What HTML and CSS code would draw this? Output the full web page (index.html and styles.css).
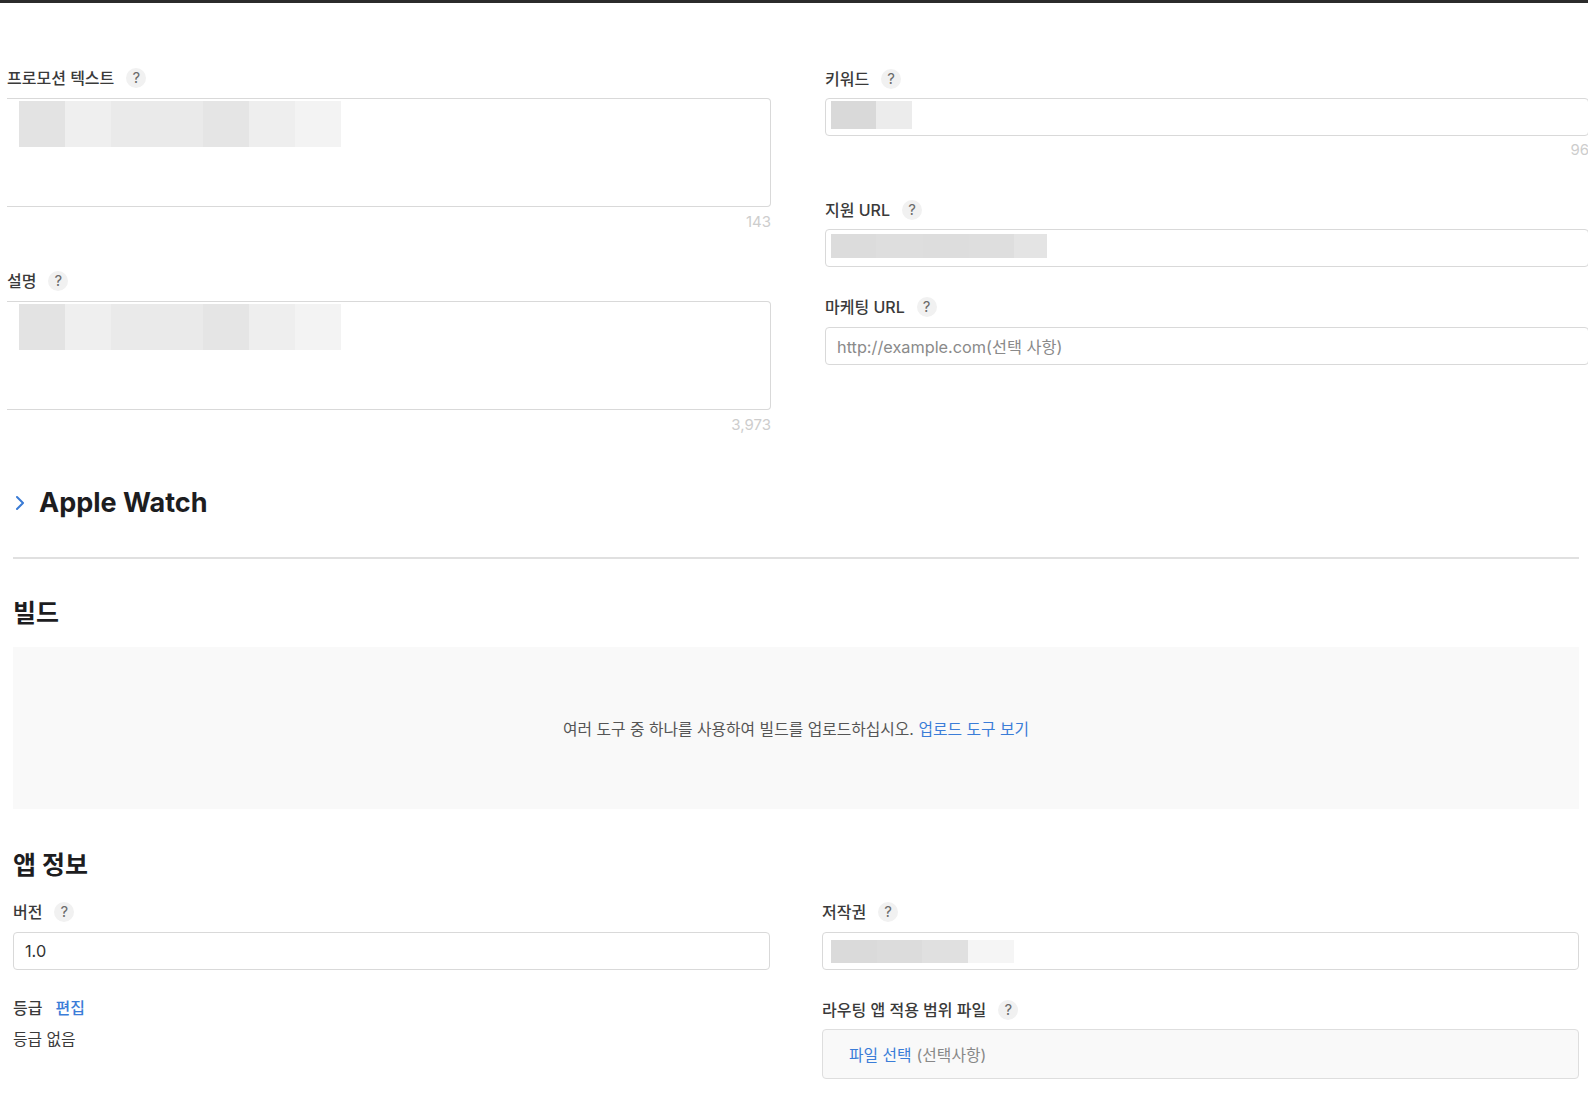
FILE: index.html
```html
<!DOCTYPE html>
<html lang="ko">
<head>
<meta charset="utf-8">
<title>앱 정보</title>
<link rel="stylesheet" href="styles.css">
</head>
<body>
<div class="topbar"></div>

<div class="top">
  <div class="col col-left">
    <div class="field field-gap">
      <div class="label">프로모션 텍스트<span class="help">?</span></div>
      <div class="textarea">
        <div class="redact redact-long"><i></i><i></i><i></i><i></i><i></i><i></i><i></i></div>
      </div>
      <div class="counter">143</div>
    </div>
    <div class="field">
      <div class="label">설명<span class="help">?</span></div>
      <div class="textarea">
        <div class="redact redact-long"><i></i><i></i><i></i><i></i><i></i><i></i><i></i></div>
      </div>
      <div class="counter">3,973</div>
    </div>
  </div>

  <div class="col col-right">
    <div class="field field-gap-r1">
      <div class="label">키워드<span class="help">?</span></div>
      <div class="input input-redact">
        <div class="redact redact-kw"><i></i><i></i></div>
      </div>
      <div class="counter counter-r">96</div>
    </div>
    <div class="field field-gap-r2">
      <div class="label">지원 URL<span class="help">?</span></div>
      <div class="input input-redact">
        <div class="redact redact-url"><i></i><i></i><i></i><i></i><i></i></div>
      </div>
    </div>
    <div class="field">
      <div class="label">마케팅 URL<span class="help">?</span></div>
      <div class="input input-text placeholder">http://example.com(선택 사항)</div>
    </div>
  </div>
</div>

<div class="main">
  <div class="aw-row">
    <svg class="chev" width="10" height="16" viewBox="0 0 10 16"><path d="M2 2 L8 8 L2 14" fill="none" stroke="#3a7bd5" stroke-width="2" stroke-linecap="round" stroke-linejoin="round"/></svg>
    <span class="aw-title">Apple Watch</span>
  </div>
  <div class="divider"></div>

  <h2 class="section-title build-title">빌드</h2>
  <div class="build-box">
    <span>여러 도구 중 하나를 사용하여 빌드를 업로드하십시오. <a class="link">업로드 도구 보기</a></span>
  </div>

  <h2 class="section-title info-title">앱 정보</h2>
  <div class="info-grid">
    <div class="col">
      <div class="label">버전<span class="help">?</span></div>
      <div class="input input-text value">1.0</div>
      <div class="label rating-label">등급<a class="link edit">편집</a></div>
      <div class="rating-value">등급 없음</div>
    </div>
    <div class="col">
      <div class="label">저작권<span class="help">?</span></div>
      <div class="input input-redact input-copy">
        <div class="redact redact-copy"><i></i><i></i><i></i><i></i></div>
      </div>
      <div class="label routing-label">라우팅 앱 적용 범위 파일<span class="help">?</span></div>
      <div class="file-box"><a class="link">파일 선택</a><span class="opt">(선택사항)</span></div>
    </div>
  </div>
</div>
</body>
</html>
```

FILE: styles.css
```css
* { box-sizing: border-box; }
html, body { margin: 0; padding: 0; background: #fff; }
body {
  font-family: "Inter", "Noto Sans CJK KR", sans-serif;
  color: #333;
  width: 1588px;
  height: 1108px;
  overflow: hidden;
}

.topbar { height: 3px; background: #2b2b2b; }

/* top two-column area */
.top {
  display: grid;
  grid-template-columns: 764px 764px;
  column-gap: 54px;
  padding-left: 7px;
  padding-top: 65px;
}
.col-right { padding-top: 1px; }

.field-gap { margin-bottom: 40px; }
.field-gap-r1 { margin-bottom: 41px; }
.field-gap-r2 { margin-bottom: 30px; }

.label {
  height: 20px;
  display: flex;
  align-items: center;
  font-size: 16px;
  line-height: 20px;
  font-weight: 500;
  color: #3a3a3a;
  white-space: nowrap;
}
.help {
  width: 20px;
  height: 20px;
  border-radius: 50%;
  background: #f1f1f1;
  color: #6a6a6a;
  font-size: 15px;
  font-weight: 400;
  line-height: 20px;
  display: inline-flex;
  align-items: center;
  justify-content: center;
  margin-left: 12px;
}

.textarea {
  margin-top: 10px;
  height: 109px;
  border: 1px solid #d9d9d9;
  border-left: 0;
  border-radius: 0 4px 4px 0;
  padding: 2px 0 0 12px;
}
.counter {
  margin-top: 6px;
  height: 18px;
  line-height: 18px;
  text-align: right;
  font-size: 15px;
  color: #cdcdcd;
}
.counter-r { margin-top: 5px; }

.input {
  margin-top: 9px;
  height: 38px;
  border: 1px solid #d9d9d9;
  border-radius: 4px;
  display: flex;
  align-items: flex-start;
}
.input-text {
  align-items: center;
  padding-left: 11px;
  font-size: 16.3px;
}
.input-redact { padding: 2px 0 0 5px; }
.placeholder { color: #8a8a8a; margin-top: 10px; }
.value { color: #333; }

/* redacted (blurred) values */
.redact { display: flex; }
.redact i { display: block; width: 46px; }
.redact-long { height: 46px; }
.redact-long i:nth-child(1) { background: #e3e3e3; }
.redact-long i:nth-child(2) { background: #efefef; }
.redact-long i:nth-child(3) { background: #eaeaea; }
.redact-long i:nth-child(4) { background: #eaeaea; }
.redact-long i:nth-child(5) { background: #e5e5e5; }
.redact-long i:nth-child(6) { background: #eeeeee; }
.redact-long i:nth-child(7) { background: #f3f3f3; }

.redact-kw { height: 28px; }
.redact-kw i:nth-child(1) { background: #d9d9d9; width: 45px; }
.redact-kw i:nth-child(2) { background: #ececec; width: 36px; }

.redact-url { height: 24px; margin-top: 2px; }
.redact-url i:nth-child(1) { background: #dcdcdc; width: 45px; }
.redact-url i:nth-child(2) { background: #dedede; width: 47px; }
.redact-url i:nth-child(3) { background: #dddddd; width: 46px; }
.redact-url i:nth-child(4) { background: #dedede; width: 45px; }
.redact-url i:nth-child(5) { background: #e4e4e4; width: 33px; }

.input-copy { padding: 7px 0 0 8px; }
.redact-copy { height: 23px; }
.redact-copy i:nth-child(1) { background: #dadada; }
.redact-copy i:nth-child(2) { background: #dcdcdc; width: 45px; }
.redact-copy i:nth-child(3) { background: #e0e0e0; }
.redact-copy i:nth-child(4) { background: #f5f5f5; }

/* main area */
.main { padding: 0 9px 0 13px; }

.aw-row {
  display: flex;
  align-items: center;
  height: 34px;
  margin-top: 52px;
}
.chev { margin-left: 2px; }
.aw-title {
  margin-left: 14px;
  font-size: 27px;
  font-weight: 700;
  color: #1d1d1f;
  line-height: 34px;
}
.divider {
  margin-top: 37px;
  height: 2px;
  background: #e0e0e0;
}

.section-title {
  margin: 0;
  font-size: 25px;
  font-weight: 700;
  line-height: 30px;
  color: #1d1d1f;
}
.build-title { margin-top: 39px; }
.build-box {
  margin-top: 19px;
  height: 162px;
  background: #f9f9f9;
  display: flex;
  align-items: center;
  justify-content: center;
  font-size: 15.8px;
  color: #555;
}
.link { color: #3b7dd8; text-decoration: none; }

.info-title { margin-top: 41px; }
.info-grid {
  margin-top: 22px;
  display: grid;
  grid-template-columns: 1fr 1fr;
  column-gap: 52px;
}
.info-grid .input { margin-top: 10px; }
.rating-label { margin-top: 28px; }
.edit { margin-left: 13px; }
.rating-value {
  margin-top: 12px;
  height: 20px;
  line-height: 20px;
  font-size: 15.8px;
  color: #3a3a3a;
}
.routing-label { margin-top: 30px; }
.file-box {
  margin-top: 9px;
  height: 50px;
  border: 1px solid #dedede;
  border-radius: 4px;
  background: #f9f9f9;
  display: flex;
  align-items: center;
  padding-left: 26px;
  font-size: 15.8px;
}
.opt { color: #888; margin-left: 5px; }
```
